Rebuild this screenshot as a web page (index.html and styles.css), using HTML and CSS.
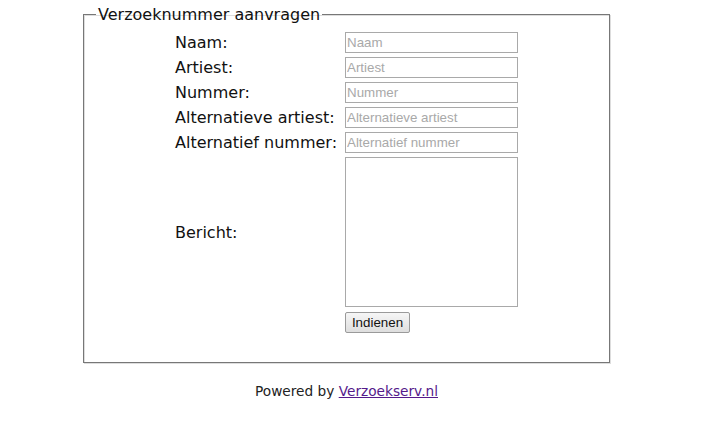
FILE: index.html
```html
<!DOCTYPE html>
<html>
<head>
<meta charset="utf-8">
<link rel="stylesheet" href="styles.css">
</head>
<body>
<div class="wrap">
  <form class="form">
    <fieldset class="box">
      <legend class="legend">Verzoeknummer aanvragen</legend>
      <table class="grid">
        <tr><td class="lbl">Naam:</td><td><input class="field" type="text" placeholder="Naam"></td></tr>
        <tr><td class="lbl">Artiest:</td><td><input class="field" type="text" placeholder="Artiest"></td></tr>
        <tr><td class="lbl">Nummer:</td><td><input class="field" type="text" placeholder="Nummer"></td></tr>
        <tr><td class="lbl">Alternatieve artiest:</td><td><input class="field" type="text" placeholder="Alternatieve artiest"></td></tr>
        <tr><td class="lbl">Alternatief nummer:</td><td><input class="field" type="text" placeholder="Alternatief nummer"></td></tr>
        <tr><td class="lbl">Bericht:</td><td><textarea class="msg"></textarea></td></tr>
        <tr><td></td><td><button class="btn" type="button">Indienen</button></td></tr>
      </table>
    </fieldset>
  </form>
  <p class="footer">Powered by <a class="link" href="#">Verzoekserv.nl</a></p>
</div>
</body>
</html>
```

FILE: styles.css
```css
html, body {
  margin: 0;
  padding: 0;
  background: #fff;
}
body {
  font-family: "DejaVu Sans", Verdana, sans-serif;
  color: #111;
}
.wrap {
  width: 527px;
  margin-left: 83px;
  padding-top: 5px;
}
.form {
  margin: 0;
}
.box {
  margin: 0;
  border: 1px solid #777;
  box-shadow: inset 1px 1px 0 #ddd, 1px 1px 0 #ddd;
  padding: 5px 12px 27px 12px;
  font-size: 16px;
  box-sizing: border-box;
  width: 527px;
  height: 358px;
}
.legend {
  padding: 0 2px;
  font-size: 16px;
  line-height: 19px;
}
.grid {
  margin: 0 auto;
  border-collapse: separate;
  border-spacing: 2px;
  font-size: 16px;
}
.grid td {
  padding: 1px;
  vertical-align: middle;
}
.lbl {
  width: 166px;
  white-space: nowrap;
}
.field {
  box-sizing: border-box;
  width: 173px;
  height: 21px;
  margin: 0;
  padding: 1px 1px;
  border: 1px solid #a9a9a9;
  font-family: "Liberation Sans", Arial, sans-serif;
  font-size: 13.33px;
  color: #333;
  display: block;
}
.field::placeholder {
  color: #a9a9a9;
  opacity: 1;
}
.msg {
  box-sizing: border-box;
  display: block;
  width: 173px;
  height: 150px;
  margin: 0;
  border: 1px solid #a9a9a9;
  resize: none;
  font-family: "Liberation Sans", Arial, sans-serif;
  font-size: 13.33px;
}
.btn {
  display: block;
  box-sizing: border-box;
  width: 65px;
  height: 21px;
  margin: 1px 0 0 0;
  padding: 0;
  border: 1px solid #9a9a9a;
  border-radius: 2px;
  background: linear-gradient(#f6f6f6, #dedede);
  font-family: "Liberation Sans", Arial, sans-serif;
  font-size: 13.33px;
  color: #111;
}
.footer {
  margin: 20px 0 0 0;
  text-align: center;
  font-size: 13.7px;
  color: #222;
}
.link {
  color: #551a8b;
}
```
